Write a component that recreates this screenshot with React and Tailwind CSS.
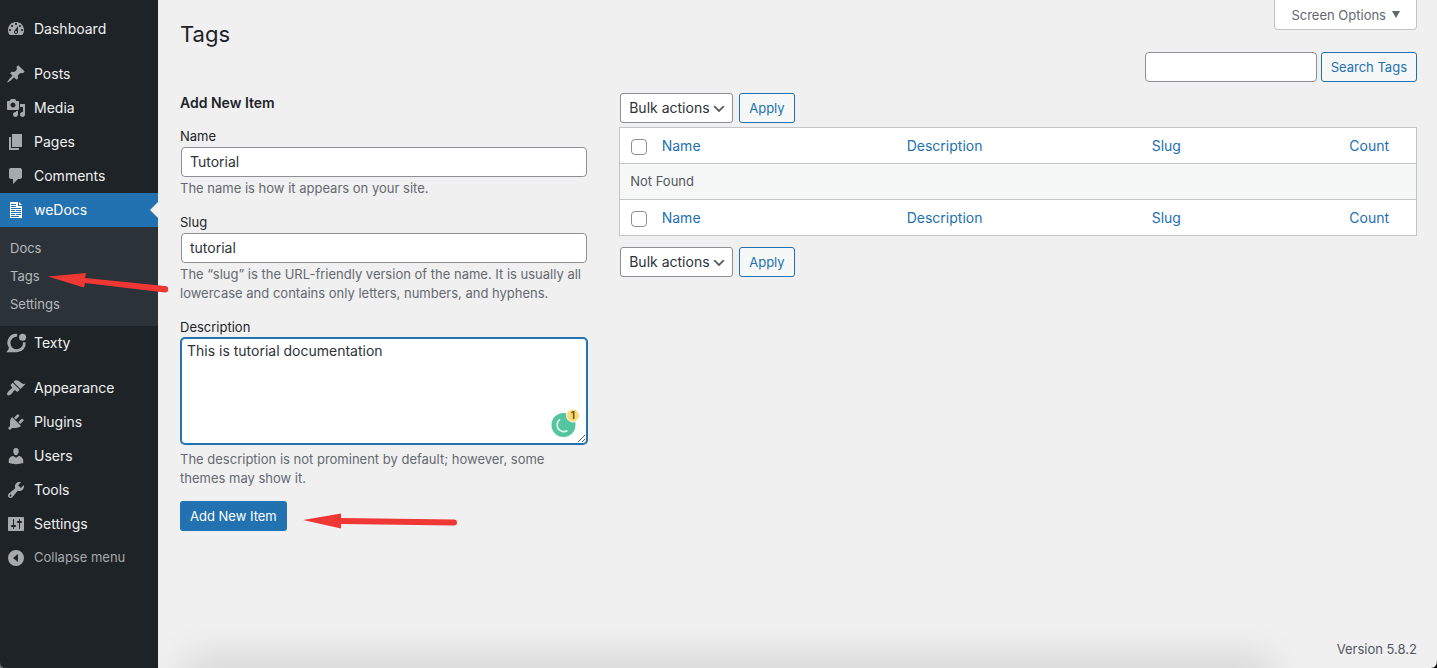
import React, { useState } from 'react'

const ICONS = {
  dashboard:
    'M3.76 16h12.48c1.1-1.37 1.76-3.11 1.76-5 0-4.42-3.58-8-8-8s-8 3.58-8 8c0 1.89.66 3.63 1.76 5zM10 4c.55 0 1 .45 1 1s-.45 1-1 1-1-.45-1-1 .45-1 1-1zM6 6c.55 0 1 .45 1 1s-.45 1-1 1-1-.45-1-1 .45-1 1-1zm8 0c.55 0 1 .45 1 1s-.45 1-1 1-1-.45-1-1 .45-1 1-1zm-5.37 5.55L12 7v6c0 1.1-.9 2-2 2s-2-.9-2-2c0-.57.24-1.08.63-1.45zM4 10c.55 0 1 .45 1 1s-.45 1-1 1-1-.45-1-1 .45-1 1-1zm12 0c.55 0 1 .45 1 1s-.45 1-1 1-1-.45-1-1 .45-1 1-1zm-5 3c0-.55-.45-1-1-1s-1 .45-1 1 .45 1 1 1 1-.45 1-1z',
  posts:
    'M10.44 3.02l1.82-1.82 6.36 6.35-1.83 1.82c-1.05-.68-2.48-.57-3.41.36l-.75.75c-.92.93-1.04 2.35-.35 3.41l-1.83 1.82-2.41-2.41-2.8 2.79c-.42.42-3.38 2.71-3.8 2.29s1.86-3.39 2.28-3.81l2.79-2.79L4.1 9.36l1.83-1.82c1.05.69 2.48.57 3.4-.36l.75-.75c.93-.92 1.05-2.35.36-3.41z',
  media:
    'M13 11V4c0-.55-.45-1-1-1h-1.67L9 1H5L3.67 3H2c-.55 0-1 .45-1 1v7c0 .55.45 1 1 1h10c.55 0 1-.45 1-1zM7 4.5c1.38 0 2.5 1.12 2.5 2.5S8.38 9.5 7 9.5 4.5 8.38 4.5 7 5.62 4.5 7 4.5zM14 6h5v10.5c0 1.38-1.12 2.5-2.5 2.5S14 17.88 14 16.5s1.12-2.5 2.5-2.5c.17 0 .34.02.5.05V9h-3V6zm-4 8.05V13h2v3.5c0 1.38-1.12 2.5-2.5 2.5S7 17.88 7 16.5 8.12 14 9.5 14c.17 0 .34.02.5.05z',
  pages: 'M6 15V2h10v13H6zm-1 1h8v2H3V5h2v11z',
  comments: 'M5 2h9c1.1 0 2 .9 2 2v7c0 1.1-.9 2-2 2h-2l-5 5v-5H5c-1.1 0-2-.9-2-2V4c0-1.1.9-2 2-2z',
  appearance:
    'M14.48 11.06L7.41 3.99l1.5-1.5c.5-.56 2.3-.47 3.51.32 1.21.8 1.43 1.28 2.91 2.1 1.18.64 2.45 1.26 4.45.85zm-.71.71L6.7 4.7 4.93 6.47c-.39.39-.39 1.02 0 1.41l1.06 1.06c.39.39.39 1.03 0 1.42-.6.6-1.43 1.11-2.21 1.69-.35.26-.7.53-1.01.84C1.43 14.23.4 16.08 1.4 17.07c.99 1 2.84-.03 4.18-1.36.31-.31.58-.66.85-1.02.57-.78 1.08-1.61 1.69-2.21.39-.39 1.02-.39 1.41 0l1.06 1.06c.39.39 1.02.39 1.41 0z',
  plugins:
    'M13.11 4.36L9.87 7.6 8 5.73l3.24-3.24c.35-.34 1.05-.2 1.56.32.52.51.66 1.21.31 1.55zm-8 1.77l.91-1.12 9.01 9.01-1.19.84c-.71.71-2.63 1.16-3.82 1.16H6.14L4.9 17.26c-.59.59-1.54.59-2.12 0-.59-.58-.59-1.53 0-2.12l1.24-1.24v-3.88c0-1.13.4-3.19 1.09-3.89zm7.26 3.97l3.24-3.24c.34-.35 1.04-.21 1.55.31.52.51.66 1.21.31 1.55l-3.24 3.25z',
  users:
    'M10 9.25c-2.27 0-2.73-3.44-2.73-3.44C7 4.02 7.82 2 9.97 2c2.16 0 2.98 2.02 2.71 3.81 0 0-.41 3.44-2.68 3.44zm0 2.57L12.72 10c2.39 0 4.52 2.33 4.52 4.53v2.49s-3.65 1.13-7.24 1.13c-3.65 0-7.24-1.13-7.24-1.13v-2.49c0-2.25 1.94-4.48 4.47-4.48z',
  tools:
    'M16.68 9.77c-1.34 1.34-3.3 1.67-4.95.99l-5.41 6.52c-.99.99-2.59.99-3.58 0s-.99-2.59 0-3.57l6.52-5.42c-.68-1.65-.35-3.61.99-4.95 1.28-1.28 3.12-1.62 4.72-1.06l-2.89 2.89 2.82 2.82 2.86-2.87c.53 1.58.18 3.39-1.08 4.65zM3.81 16.21c.4.39 1.04.39 1.43 0 .4-.4.4-1.04 0-1.43-.39-.4-1.03-.4-1.43 0-.39.39-.39 1.03 0 1.43z',
  settings:
    'M18 16V4c0-.55-.45-1-1-1H3c-.55 0-1 .45-1 1v12c0 .55.45 1 1 1h14c.55 0 1-.45 1-1zM8 11h1c.55 0 1 .45 1 1s-.45 1-1 1H8v1.5c0 .28-.22.5-.5.5s-.5-.22-.5-.5V13H6c-.55 0-1-.45-1-1s.45-1 1-1h1V5.5c0-.28.22-.5.5-.5s.5.22.5.5V11zm5-2h-1c-.55 0-1-.45-1-1s.45-1 1-1h1V5.5c0-.28.22-.5.5-.5s.5.22.5.5V7h1c.55 0 1 .45 1 1s-.45 1-1 1h-1v5.5c0 .28-.22.5-.5.5s-.5-.22-.5-.5V9z',
  collapse: 'M10 2a8 8 0 1 0 0 16 8 8 0 0 0 0-16zM12 6v8L7 10z',
  wedocs:
    'M4 2h8v4h4v12H4zM5 4v1h5V4zM5 6v1h5V6zM5 8v1h10V8zM5 10v1h4v-1zM10 10v1h5v-1zM5 12v1h10v-1zM5 14v1h4v-1zM10 14v1h5v-1zM5 16v1h8v-1zM13 2l3 3h-3z',
}

const MENU = [
  [{ icon: 'dashboard', label: 'Dashboard' }],
  [
    { icon: 'posts', label: 'Posts' },
    { icon: 'media', label: 'Media' },
    { icon: 'pages', label: 'Pages' },
    { icon: 'comments', label: 'Comments' },
    { icon: 'wedocs', label: 'weDocs', children: ['Docs', 'Tags', 'Settings'] },
    { icon: 'texty', label: 'Texty' },
  ],
  [
    { icon: 'appearance', label: 'Appearance' },
    { icon: 'plugins', label: 'Plugins' },
    { icon: 'users', label: 'Users' },
    { icon: 'tools', label: 'Tools' },
    { icon: 'settings', label: 'Settings' },
  ],
]

function Icon({ name }) {
  if (name === 'texty') {
    return (
      <svg viewBox="0 0 20 20" className="w-5 h-5 shrink-0 overflow-visible" aria-hidden="true">
        <path
          d="M11.5 1A8.8 8.8 0 0 0 3 14.8Q2.5 17 .2 19.3H11A8.800 8.800 0 0 0 19.7 9.5L17 9.3A6.300 6.300 0 1 1 10.8 3.7z"
          fill="currentColor"
        />
        <circle cx="16.6" cy="4.2" r="3.5" fill="currentColor" />
      </svg>
    )
  }
  return (
    <svg viewBox="0 0 20 20" className="w-5 h-5 shrink-0" aria-hidden="true">
      <path d={ICONS[name]} fill="currentColor" fillRule="evenodd" />
    </svg>
  )
}

function MenuItem({ item }) {
  const active = Boolean(item.children)
  return (
    <li>
      <a
        href="#"
        className={`relative flex items-center gap-2 h-[34px] pl-1.5 text-sm ${active ? 'bg-[#2271b1] text-white' : 'text-[#f0f0f1]'}`}
      >
        <span className={active ? 'text-white' : 'text-[#a7aaad]'}>
          <Icon name={item.icon} />
        </span>
        {item.label}
        {active && (
          <span className="absolute right-0 top-1/2 -translate-y-1/2 border-y-8 border-r-8 border-y-transparent border-r-[#f0f0f1]" />
        )}
      </a>
      {active && (
        <ul className="bg-[#2c3338] pt-2 pb-[7px]">
          {item.children.map((child) => (
            <li key={child} className="relative">
              <a href="#" className="flex items-center h-7 pl-2.5 text-[13px] text-[#b4b9be]">
                {child}
              </a>
              {child === 'Tags' && (
                <svg viewBox="0 0 122 24" className="absolute left-12 top-1.5 z-10 w-[122px] h-6" aria-hidden="true">
                  <path d="M0 7.500L38 4 37 9 117 17A3 3 0 0 1 117 23.500L37 14 36 18.500z" fill="#ef3834" />
                </svg>
              )}
            </li>
          ))}
        </ul>
      )}
    </li>
  )
}

function Sidebar() {
  return (
    <nav className="w-[158px] shrink-0 bg-[#1d2327] pt-3">
      <div className="flex flex-col gap-[11px]">
        {MENU.map((group) => (
          <ul key={group[0].label}>
            {group.map((item) => (
              <MenuItem key={item.label} item={item} />
            ))}
          </ul>
        ))}
      </div>
      <button type="button" className="flex items-center gap-2 h-[34px] w-full pl-1.5 text-[13px] text-[#a7aaad]">
        <Icon name="collapse" />
        Collapse menu
      </button>
    </nav>
  )
}

function Field({ id, label, help, children }) {
  return (
    <div className="flex flex-col mb-[15px]">
      <label htmlFor={id} className="leading-[19px] mb-px">
        {label}
      </label>
      {children}
      <p className="leading-[19px] mt-0.5 text-[#646970]">{help}</p>
    </div>
  )
}

const inputClass = 'h-[30px] rounded border border-[#8c8f94] bg-white px-2 pb-0.5 text-sm text-[#2c3338]'
const buttonClass =
  'h-[30px] rounded-[3px] border border-[#2271b1] bg-[#f6f7f7] px-[9px] pt-0.5 text-[13px] text-[#2271b1]'

function BulkActions() {
  return (
    <div className="flex gap-1.5 pl-px">
      <div className="relative">
        <select
          aria-label="Select bulk action"
          className="appearance-none h-[30px] w-[113px] rounded-[3px] border border-[#8c8f94] bg-white pl-2 pr-0 text-sm text-[#2c3338]"
        >
          <option>Bulk actions</option>
          <option>Delete</option>
        </select>
        <svg viewBox="0 0 20 20" className="pointer-events-none absolute right-1.5 top-2 w-4 h-4" aria-hidden="true">
          <path d="M5 6l5 5 5-5 2 1-7 7-7-7 2-1z" fill="#555" />
        </svg>
      </div>
      <button type="button" className={buttonClass}>
        Apply
      </button>
    </div>
  )
}

function HeadingRow({ id }) {
  return (
    <tr className="h-9 text-sm text-[#2271b1]">
      <td className="pl-[11px]">
        <input
          id={id}
          type="checkbox"
          aria-label="Select All"
          className="block appearance-none w-4 h-4 mt-0.5 rounded border border-[#8c8f94] bg-white"
        />
      </td>
      {['Name', 'Description', 'Slug', 'Count'].map((name) => (
        <th key={name} scope="col" className={`font-normal ${name === 'Count' ? 'text-center' : 'text-left pl-2.5'}`}>
          <a href="#">{name}</a>
        </th>
      ))}
    </tr>
  )
}

function TagsTable() {
  return (
    <table className="w-full table-fixed border-collapse border border-[#c3c4c7] bg-white">
      <colgroup>
        <col className="w-8" />
        <col className="w-[245px]" />
        <col className="w-[245px]" />
        <col />
        <col className="w-[94px]" />
      </colgroup>
      <thead className="border-b border-[#c3c4c7]">
        <HeadingRow id="cb-top" />
      </thead>
      <tbody className="bg-[#f6f7f7] text-[#50575e]">
        <tr className="h-9">
          <td colSpan={5} className="px-2.5">
            Not Found
          </td>
        </tr>
      </tbody>
      <tfoot className="border-t border-[#c3c4c7]">
        <HeadingRow id="cb-bottom" />
      </tfoot>
    </table>
  )
}

export default function App() {
  const [name, setName] = useState('Tutorial')
  const [slug, setSlug] = useState('tutorial')
  const [description, setDescription] = useState('This is tutorial documentation')

  return (
    <div className="relative flex min-h-screen overflow-hidden bg-[#f0f0f1] font-['Inter',sans-serif] text-[13px] text-[#1d2327]">
      <Sidebar />

      <main className="flex flex-col flex-1 min-w-0 pl-[22px] pr-5">
        <div className="flex justify-between items-start">
          <h1 className="pt-[18px] text-[22px] leading-8">Tags</h1>
          <button
            type="button"
            className="flex items-center gap-1.5 h-[30px] rounded-b border border-t-0 border-[#c3c4c7] bg-white px-4 pt-0.5 text-[#646970]"
          >
            Screen Options
            <svg viewBox="0 0 8 7" className="w-2 h-[7px] mb-0.5" aria-hidden="true">
              <path d="M0 0h8L4 7z" fill="currentColor" />
            </svg>
          </button>
        </div>

        <form className="flex justify-end gap-1 mt-0.5" onSubmit={(e) => e.preventDefault()}>
          <input type="search" aria-label="Search Tags" className={`${inputClass} w-[172px]`} />
          <button type="submit" className={buttonClass}>
            Search Tags
          </button>
        </form>

        <div className="flex gap-[31px] mt-[11px]">
          {/* Add form */}
          <form className="w-[33%] shrink-0" onSubmit={(e) => e.preventDefault()}>
            <h2 className="text-sm font-semibold mb-3.5">Add New Item</h2>
            <Field id="tag-name" label="Name" help="The name is how it appears on your site.">
              <input
                id="tag-name"
                type="text"
                value={name}
                onChange={(e) => setName(e.target.value)}
                className={`${inputClass} mx-px`}
              />
            </Field>
            <Field
              id="tag-slug"
              label="Slug"
              help="The “slug” is the URL-friendly version of the name. It is usually all lowercase and contains only letters, numbers, and hyphens."
            >
              <input
                id="tag-slug"
                type="text"
                value={slug}
                onChange={(e) => setSlug(e.target.value)}
                className={`${inputClass} mx-px`}
              />
            </Field>
            <Field
              id="tag-description"
              label="Description"
              help="The description is not prominent by default; however, some themes may show it."
            >
              <div className="relative mx-px mb-1">
                <textarea
                  id="tag-description"
                  value={description}
                  onChange={(e) => setDescription(e.target.value)}
                  className="block w-full h-[106px] rounded border border-[#2271b1] ring-1 ring-[#2271b1] bg-white px-[5px] py-0.5 text-sm text-[#2c3338] outline-none"
                />
                {/* Writing assistant badge */}
                <svg viewBox="0 0 30 30" className="absolute right-1.5 bottom-1.5 w-[30px] h-[30px]" aria-hidden="true">
                  <circle cx="12.5" cy="17" r="12" fill="#54c59f" />
                  <path d="M9 11.5A6.500 6.500 0 1 0 16.5 22.5" fill="none" stroke="#d9f3e9" strokeWidth="1.8" />
                  <circle cx="22" cy="7.5" r="6.5" fill="#fcdc79" stroke="#fff" />
                  <text x="22" y="11" textAnchor="middle" fontSize="10" fontWeight="700" fill="#7a4a0a">
                    1
                  </text>
                </svg>
              </div>
            </Field>
            <div className="relative -mt-0.5">
              <button type="submit" className="h-[30px] rounded-[3px] bg-[#2271b1] px-2.5 pt-0.5 text-[13px] text-white">
                Add New Item
              </button>
              <svg viewBox="0 0 154 18" className="absolute left-[123px] top-[11px] w-[154px] h-[18px]" aria-hidden="true">
                <path d="M0 8L38 1.500V6L151 7.500A3 3 0 0 1 151 13.500L38 12V16.500z" fill="#ef3834" />
              </svg>
            </div>
          </form>

          {/* List table */}
          <div className="flex-1 min-w-0">
            <BulkActions />
            <div className="mt-1 mb-[11px]">
              <TagsTable />
            </div>
            <BulkActions />
          </div>
        </div>

        <footer className="mt-auto pb-[9px] text-right leading-[19px] text-[#50575e]">Version 5.8.2</footer>
      </main>

      {/* Window edge: shadow from below and rounded corners */}
      <div className="pointer-events-none absolute left-[195px] right-[175px] -bottom-5 h-5 shadow-[0_0_40px_8px_rgba(0,0,0,0.14)]" />
      <svg viewBox="0 0 6 6" className="pointer-events-none absolute left-0 bottom-0 w-1.5 h-1.5" aria-hidden="true">
        <path d="M0 0Q0 6 6 6H0z" fill="#6b7075" />
      </svg>
      <svg viewBox="0 0 6 8" className="pointer-events-none absolute right-0 bottom-0 w-1.5 h-2" aria-hidden="true">
        <path d="M6 0Q6 8 0 8H6z" fill="#000" />
      </svg>
    </div>
  )
}
